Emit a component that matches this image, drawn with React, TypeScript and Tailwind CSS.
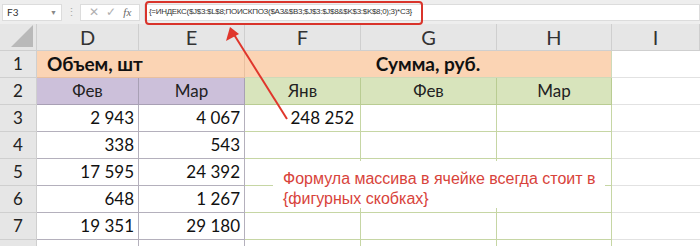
import React from 'react';

const cols = ['D', 'E', 'F', 'G', 'H', 'I'];
const colWidths = 'grid-cols-[37px_102px_106px_116px_136px_115px_88px]';

const data: [string, string][] = [
  ['2 943', '4 067'],
  ['338', '543'],
  ['17 595', '24 392'],
  ['648', '1 267'],
  ['19 351', '29 180'],
];

function RowHead({ n }: { n?: number }) {
  return (
    <div className="h-[27px] bg-[#e6e6e6] border-r border-b border-[#cfcfcf] flex items-center justify-center text-[17px] text-[#222]">
      {n}
    </div>
  );
}

function FormulaBar() {
  return (
    <div className="relative h-[24px] bg-[#eeeeee] flex items-center text-[10px] text-[#333]">
      <div className="ml-[2px] w-[60px] h-[17px] bg-white border border-[#dcdcdc] flex items-center justify-between px-[4px]">
        <span>F3</span>
        <span className="text-[7px] text-[#888]">▼</span>
      </div>
      <div className="w-[18px] flex justify-center text-[#aaa] text-[11px]">⋮</div>
      <div className="w-[60px] h-[17px] bg-white border border-[#dcdcdc] flex items-center justify-around px-[4px] text-[#b0b0b0]">
        <span className="text-[12px]">✕</span>
        <span className="text-[12px]">✓</span>
        <span className="italic text-[#666] text-[11px] font-['Liberation_Serif',serif]">fx</span>
      </div>
      <div className="ml-[4px] flex-1 h-[17px] bg-white border border-[#dcdcdc] flex items-center pl-[4px] text-[8px] tracking-[-0.3px] font-['Liberation_Sans',sans-serif]">
        {'{=ИНДЕКС($J$3:$L$8;ПОИСКПОЗ($A3&$B3;$J$3:$J$8&$K$3:$K$8;0);3)*C3}'}
      </div>
      <div className="absolute left-[145px] top-[1px] w-[278px] h-[24px] border-2 border-[#d9342b] rounded-[4px]" />
    </div>
  );
}

export default function App() {
  return (
    <div className="relative w-[700px] h-[246px] overflow-hidden bg-white font-['Lato','Open_Sans',sans-serif]">
      <FormulaBar />
      <div className={`grid ${colWidths}`}>
        {/* column headers */}
        <div className="h-[27px] bg-[#e6e6e6] border-r border-b border-[#cfcfcf] relative">
          <div className="absolute right-[3px] bottom-[3px] w-0 h-0 border-l-[22px] border-l-transparent border-b-[22px] border-b-[#b9b9b9]" />
        </div>
        {cols.map((c) => (
          <div
            key={c}
            className="h-[27px] bg-[#e6e6e6] border-r border-b border-[#cfcfcf] flex items-center justify-center text-[20px] text-[#333]"
          >
            {c}
          </div>
        ))}

        {/* row 1 */}
        <RowHead n={1} />
        <div className="col-span-2 h-[27px] bg-[#fbd4b4] border-r border-b border-[#e8c0a0] flex items-center pl-[10px] text-[19px] font-bold text-[#111]">
          Объем, шт
        </div>
        <div className="col-span-3 h-[27px] bg-[#fbd4b4] border-r border-b border-[#cfd9b8] flex items-center justify-center text-[19px] font-bold text-[#111]">
          Сумма, руб.
        </div>
        <div className="h-[27px] border-b border-[#e2e2e2]" />

        {/* row 2 */}
        <RowHead n={2} />
        <div className="h-[27px] bg-[#ccc0da] border-r border-b border-[#a8a0b4] flex items-center justify-center text-[17px] text-[#222]">Фев</div>
        <div className="h-[27px] bg-[#ccc0da] border-r border-b border-[#a8a0b4] flex items-center justify-center text-[17px] text-[#222]">Мар</div>
        {['Янв', 'Фев', 'Мар'].map((m) => (
          <div key={m} className="h-[27px] bg-[#d8e4bc] border-r border-b border-[#b9cc92] flex items-center justify-center text-[17px] text-[#222]">
            {m}
          </div>
        ))}
        <div className="h-[27px] border-b border-[#e2e2e2]" />

        {/* rows 3-7 */}
        {data.map(([d, e], i) => (
          <React.Fragment key={i}>
            <RowHead n={i + 3} />
            <div className="h-[27px] border-r border-b border-[#b4b0bc] flex items-center justify-end pr-[4px] text-[17px] text-[#111]">{d}</div>
            <div className="h-[27px] border-r border-b border-[#b4b0bc] flex items-center justify-end pr-[4px] text-[17px] text-[#111]">{e}</div>
            <div className="h-[27px] border-r border-b border-[#c6d6a4] flex items-center justify-end pr-[6px] text-[17px] text-[#111]">
              {i === 0 ? '248 252' : ''}
            </div>
            <div className="h-[27px] border-r border-b border-[#c6d6a4]" />
            <div className="h-[27px] border-r border-b border-[#c6d6a4]" />
            <div className="h-[27px] border-b border-[#e2e2e2]" />
          </React.Fragment>
        ))}

        {/* row 8 (partial, below the edge) */}
        <RowHead />
        <div className="h-[27px] border-r border-[#b4b0bc]" />
        <div className="h-[27px] border-r border-[#b4b0bc]" />
        <div className="h-[27px] border-r border-[#c6d6a4]" />
        <div className="h-[27px] border-r border-[#c6d6a4]" />
        <div className="h-[27px] border-r border-[#c6d6a4]" />
        <div className="h-[27px]" />
      </div>

      {/* annotation */}
      <div className="absolute left-[273px] top-[161px] w-[332px] h-[47px] bg-white px-[10px] pt-[8px] text-[16px] leading-[20px] text-[#d8433b] font-['Liberation_Sans',sans-serif] whitespace-nowrap">
        Формула массива в ячейке всегда стоит в
        <br />
        {'{фигурных скобках}'}
      </div>

      {/* arrow */}
      <svg className="absolute left-0 top-0" width="700" height="246" viewBox="0 0 700 246">
        <line x1="287" y1="119" x2="233" y2="33" stroke="#e0362c" strokeWidth="2" />
        <polygon points="230,27 226,41 239,34" fill="#e0362c" />
      </svg>
    </div>
  );
}
